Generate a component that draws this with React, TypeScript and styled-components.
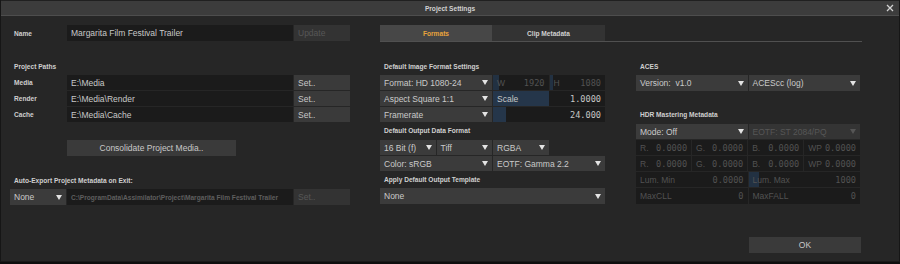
import React from 'react'
import styled, { createGlobalStyle } from 'styled-components'

const GlobalStyle = createGlobalStyle`
  html, body {
    margin: 0;
    padding: 0;
    background: #0e0e0e;
  }
  body {
    font-family: 'Liberation Sans', Arial, sans-serif;
  }
  * {
    box-sizing: border-box;
  }
`

const paths = [
  { label: 'Media', value: 'E:\\Media' },
  { label: 'Render', value: 'E:\\Media\\Render' },
  { label: 'Cache', value: 'E:\\Media\\Cache' }
]

const primaries = ['R.', 'G.', 'B.', 'WP']

const App = () => {
  return (
    <>
      <GlobalStyle />
      <Dialog>
        <TitleBar>
          <span />
          <Title>Project Settings</Title>
          <CloseButton>
            <svg width="8" height="8" viewBox="0 0 8 8">
              <path d="M1 1L7 7M7 1L1 7" stroke="#d2d2d2" strokeWidth="1.3" />
            </svg>
          </CloseButton>
        </TitleBar>

        <Body>
          <TopRow>
            <FieldRow>
              <FieldLabel>Name</FieldLabel>
              <TextField>Margarita Film Festival Trailer</TextField>
              <PlainButton $disabled>Update</PlainButton>
            </FieldRow>
            <TabBar>
              <Tab $active $width={112}>Formats</Tab>
              <Tab $width={113}>Clip Metadata</Tab>
            </TabBar>
          </TopRow>

          <Columns>
            {/* project paths + export */}
            <Column>
              <SectionLabel $top={19}>Project Paths</SectionLabel>
              <Stack $top={2}>
                {paths.map((p) => (
                  <FieldRow key={p.label} $height={15}>
                    <FieldLabel>{p.label}</FieldLabel>
                    <TextField>{p.value}</TextField>
                    <PlainButton>Set..</PlainButton>
                  </FieldRow>
                ))}
              </Stack>
              <CenterButton $top={18} $width={169} $indent={57}>
                Consolidate Project Media..
              </CenterButton>
              <SectionLabel $top={19}>Auto-Export Project Metadata on Exit:</SectionLabel>
              <FieldRow $top={2}>
                <Select>
                  None
                  <Caret />
                </Select>
                <TextField $muted $small>
                  C:\ProgramData\Assimilator\Project\Margarita Film Festival Trailer
                </TextField>
                <PlainButton $disabled>Set..</PlainButton>
              </FieldRow>
            </Column>

            {/* formats */}
            <Column>
              <SectionLabel $top={19}>Default Image Format Settings</SectionLabel>
              <Stack $top={2}>
                <Grid $cols="1fr 1fr">
                  <Select $height={15}>
                    Format: HD 1080-24
                    <Caret />
                  </Select>
                  <Grid $cols="1fr 1fr">
                    <NumField $fill={6} $disabled $height={15}>
                      <span>W</span>
                      <NumValue>1920</NumValue>
                    </NumField>
                    <NumField $fill={3} $disabled $height={15}>
                      <span>H</span>
                      <NumValue>1080</NumValue>
                    </NumField>
                  </Grid>
                </Grid>
                <Grid $cols="1fr 1fr">
                  <Select $height={15}>
                    Aspect Square 1:1
                    <Caret />
                  </Select>
                  <NumField $fill={56} $height={15}>
                    <span>Scale</span>
                    <NumValue>1.0000</NumValue>
                  </NumField>
                </Grid>
                <Grid $cols="1fr 1fr">
                  <Select $height={15}>
                    Framerate
                    <Caret />
                  </Select>
                  <NumField $fill={13} $height={15}>
                    <span />
                    <NumValue>24.000</NumValue>
                  </NumField>
                </Grid>
              </Stack>

              <SectionLabel $top={3}>Default Output Data Format</SectionLabel>
              <Stack $top={3}>
                <Grid $cols="repeat(4, 1fr)">
                  <Select $height={15}>
                    16 Bit (f)
                    <Caret />
                  </Select>
                  <Select $height={15}>
                    Tiff
                    <Caret />
                  </Select>
                  <Select $height={15}>
                    RGBA
                    <Caret />
                  </Select>
                </Grid>
                <Grid $cols="1fr 1fr">
                  <Select $height={15}>
                    Color: sRGB
                    <Caret />
                  </Select>
                  <Select $height={15}>
                    EOTF: Gamma 2.2
                    <Caret />
                  </Select>
                </Grid>
              </Stack>

              <SectionLabel $top={3}>Apply Default Output Template</SectionLabel>
              <Select $top={2}>
                None
                <Caret />
              </Select>
            </Column>

            {/* aces + hdr */}
            <Column $shift={1}>
              <SectionLabel $top={19}>ACES</SectionLabel>
              <Grid $cols="1fr 1fr" $top={2}>
                <Select>
                  Version:&nbsp; v1.0
                  <Caret />
                </Select>
                <Select>
                  ACEScc (log)
                  <Caret />
                </Select>
              </Grid>

              <SectionLabel $top={18}>HDR Mastering Metadata</SectionLabel>
              <Stack $top={3}>
                <Grid $cols="1fr 1fr">
                  <Select $height={15}>
                    Mode: Off
                    <Caret />
                  </Select>
                  <Select $height={15} $disabled>
                    EOTF: ST 2084/PQ
                    <Caret $disabled />
                  </Select>
                </Grid>
                {[0, 1].map((row) => (
                  <Grid key={row} $cols="repeat(4, 1fr)">
                    {primaries.map((p) => (
                      <NumField key={p} $disabled $height={15}>
                        <span>{p}</span>
                        <NumValue>0.0000</NumValue>
                      </NumField>
                    ))}
                  </Grid>
                ))}
                <Grid $cols="1fr 1fr">
                  <NumField $disabled $height={15}>
                    <span>Lum. Min</span>
                    <NumValue>0.0000</NumValue>
                  </NumField>
                  <NumField $disabled $fill={10} $height={15}>
                    <span>Lum. Max</span>
                    <NumValue>1000</NumValue>
                  </NumField>
                </Grid>
                <Grid $cols="1fr 1fr">
                  <NumField $disabled $height={16}>
                    <span>MaxCLL</span>
                    <NumValue>0</NumValue>
                  </NumField>
                  <NumField $disabled $height={16}>
                    <span>MaxFALL</span>
                    <NumValue>0</NumValue>
                  </NumField>
                </Grid>
              </Stack>

              <CenterButton $top={33} $width={112} $indent={113}>
                OK
              </CenterButton>
            </Column>
          </Columns>
        </Body>
      </Dialog>
    </>
  )
}

const Dialog = styled.div`
  width: 900px;
  height: 262px;
  background: #262626;
  border-left: 1px solid #161616;
  border-right: 1px solid #161616;
  border-bottom: 1px solid #1a1a1a;
  display: flex;
  flex-direction: column;
`

const TitleBar = styled.div`
  height: 16px;
  flex-shrink: 0;
  background: #3c3c3c;
  border-top: 1px solid #202020;
  border-bottom: 1px solid #4d4d4d;
  display: grid;
  grid-template-columns: 1fr auto 1fr;
  align-items: center;
`

const Title = styled.div`
  font-weight: 700;
  font-size: 6.6px;
  color: #d2d2d2;
`

const CloseButton = styled.div`
  justify-self: end;
  display: flex;
  align-items: center;
  padding-right: 5px;
`

const Body = styled.div`
  padding: 9px 0 0 9px;
`

const TopRow = styled.div`
  display: grid;
  grid-template-columns: 340px 482px;
  column-gap: 30px;
  align-items: start;
`

const FieldRow = styled.div<{ $height?: number; $top?: number }>`
  display: grid;
  grid-template-columns: 56px 226px 56px;
  column-gap: 1px;
  height: ${(p) => p.$height ?? 16}px;
  margin-top: ${(p) => p.$top ?? 0}px;
`

const FieldLabel = styled.div`
  display: flex;
  align-items: center;
  padding-left: 4px;
  font-weight: 700;
  font-size: 6.6px;
  color: #cfcfcf;
`

const TextField = styled.div<{ $muted?: boolean; $small?: boolean }>`
  display: flex;
  align-items: center;
  padding: 0 4px;
  background: #1b1b1b;
  color: ${(p) => (p.$muted ? '#5e5e5e' : '#c9c9c9')};
  font-size: ${(p) => (p.$small ? '6.6px' : '8.5px')};
  font-weight: ${(p) => (p.$small ? 700 : 400)};
  white-space: nowrap;
  overflow: hidden;
`

const PlainButton = styled.div<{ $disabled?: boolean }>`
  display: flex;
  align-items: center;
  padding: 0 4px;
  background: ${(p) => (p.$disabled ? '#333333' : '#3a3a3a')};
  color: ${(p) => (p.$disabled ? '#575757' : '#c9c9c9')};
  font-size: 8.5px;
`

const TabBar = styled.div`
  display: flex;
  height: 17px;
  border-bottom: 1px solid #505050;
`

const Tab = styled.div<{ $active?: boolean; $width: number }>`
  width: ${(p) => p.$width}px;
  display: flex;
  align-items: center;
  justify-content: center;
  background: ${(p) => (p.$active ? '#474747' : '#333333')};
  color: ${(p) => (p.$active ? '#e9a43c' : '#d0d0d0')};
  font-weight: 700;
  font-size: 6.6px;
`

const Columns = styled.div`
  display: grid;
  grid-template-columns: 340px 225px 225px;
  column-gap: 30px;
`

const Column = styled.div<{ $shift?: number }>`
  display: flex;
  flex-direction: column;
  margin-left: ${(p) => p.$shift ?? 0}px;
`

const SectionLabel = styled.div<{ $top: number }>`
  height: 12px;
  line-height: 12px;
  margin-top: ${(p) => p.$top}px;
  padding-left: 4px;
  font-weight: 700;
  font-size: 6.6px;
  color: #cfcfcf;
  white-space: nowrap;
`

const Stack = styled.div<{ $top?: number }>`
  display: flex;
  flex-direction: column;
  gap: 1px;
  margin-top: ${(p) => p.$top ?? 0}px;
`

const Grid = styled.div<{ $cols: string; $top?: number }>`
  display: grid;
  grid-template-columns: ${(p) => p.$cols};
  column-gap: 1px;
  margin-top: ${(p) => p.$top ?? 0}px;
`

const Select = styled.div<{ $disabled?: boolean; $height?: number; $top?: number }>`
  height: ${(p) => p.$height ?? 16}px;
  margin-top: ${(p) => p.$top ?? 0}px;
  display: flex;
  align-items: center;
  justify-content: space-between;
  padding: 0 4px;
  background: ${(p) => (p.$disabled ? '#343434' : '#3b3b3b')};
  color: ${(p) => (p.$disabled ? '#575757' : '#cacaca')};
  font-size: 8.5px;
  white-space: nowrap;
`

const Caret = styled.span<{ $disabled?: boolean }>`
  width: 0;
  height: 0;
  border-left: 3px solid transparent;
  border-right: 3px solid transparent;
  border-top: 5px solid ${(p) => (p.$disabled ? '#555555' : '#e4e4e4')};
`

const NumField = styled.div<{ $fill?: number; $disabled?: boolean; $height?: number }>`
  height: ${(p) => p.$height ?? 16}px;
  display: flex;
  align-items: center;
  justify-content: space-between;
  gap: 3px;
  padding: 0 4px;
  background: ${(p) =>
    `linear-gradient(to right, ${p.$disabled ? '#223142' : '#25364a'} ${p.$fill ?? 0}px, #1b1b1b ${p.$fill ?? 0}px)`};
  color: ${(p) => (p.$disabled ? '#525252' : '#c6c6c6')};
  font-size: 8.5px;
  white-space: nowrap;
`

const NumValue = styled.span`
  font-family: 'DejaVu Sans Mono', monospace;
  font-size: 8.6px;
`

const CenterButton = styled.div<{ $top: number; $width: number; $indent: number }>`
  width: ${(p) => p.$width}px;
  height: 16px;
  margin-top: ${(p) => p.$top}px;
  margin-left: ${(p) => p.$indent}px;
  display: flex;
  align-items: center;
  justify-content: center;
  background: #3a3a3a;
  color: #c9c9c9;
  font-size: 8.5px;
`

export default App
